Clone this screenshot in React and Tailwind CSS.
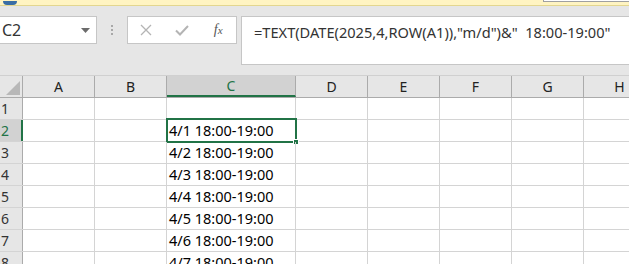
import React from "react";

const cols = [
  { name: "A", w: "w-[72px]" },
  { name: "B", w: "w-[72px]" },
  { name: "C", w: "w-[129px]", sel: true },
  { name: "D", w: "w-[72px]" },
  { name: "E", w: "w-[72px]" },
  { name: "F", w: "w-[72px]" },
  { name: "G", w: "w-[72px]" },
  { name: "H", w: "w-[72px]" },
];

const rows = [1, 2, 3, 4, 5, 6, 7, 8];

const cellText = (r) => (r >= 2 ? `4/${r - 1} 18:00-19:00` : "");

const App = () => {
  return (
    <div className="w-[629px] h-[264px] overflow-hidden bg-white font-['Segoe_UI','Noto_Sans',sans-serif] text-[#222]">
      {/* warning strip */}
      <div className="h-[6px] bg-[#fff4c2] border-b border-[#e3d68f] flex items-end relative">
        <div className="ml-[3px] w-[14px] h-[4px] rounded-b-full bg-[#3a6ea5]" />
        <div className="absolute right-0 top-0 w-[86px] h-[2px] bg-white border-b border-l border-[#a0a0a0]" />
      </div>

      {/* formula bar */}
      <div className="h-[70px] bg-[#e6e6e6] flex items-start pt-[10px] border-b border-[#d0d0d0]">
        <div className="w-[97px] h-[28px] bg-white border border-[#c6c6c6] border-l-0 flex items-center justify-between pl-[2px] pr-[6px]">
          <span className="text-[16px] text-[#333]">C2</span>
          <svg width="9" height="5" viewBox="0 0 9 5">
            <path d="M0 0h9L4.5 5z" fill="#6b6b6b" />
          </svg>
        </div>
        <div className="w-[30px] h-[28px] flex flex-col items-center justify-center gap-[2px]">
          <div className="w-[2px] h-[2px] bg-[#a8a8a8]" />
          <div className="w-[2px] h-[2px] bg-[#a8a8a8]" />
          <div className="w-[2px] h-[2px] bg-[#a8a8a8]" />
        </div>
        <div className="w-[110px] h-[28px] bg-white border border-[#c6c6c6] flex items-center">
          <div className="w-[37px] flex justify-center">
            <svg width="12" height="12" viewBox="0 0 12 12">
              <path d="M1 1l10 10M11 1L1 11" stroke="#b4b4b4" strokeWidth="1.3" />
            </svg>
          </div>
          <div className="w-[36px] flex justify-center">
            <svg width="14" height="11" viewBox="0 0 14 11">
              <path d="M1 5.5l4 4L13 1" stroke="#b4b4b4" strokeWidth="2" fill="none" />
            </svg>
          </div>
          <div className="w-[36px] flex justify-center">
            <span className="font-['Liberation_Serif',serif] italic text-[14px] text-[#555] leading-none">
              f<span className="text-[11px]">x</span>
            </span>
          </div>
        </div>
        <div className="ml-[4px] flex-1 h-[49px] bg-white border border-[#c6c6c6] border-r-0 pl-[12px] pt-[3px]">
          <span className="text-[14.6px] text-[#333]">
            =TEXT(DATE(2025,4,ROW(A1)),"m/d")&amp;"&nbsp; 18:00-19:00"
          </span>
        </div>
      </div>

      {/* column headers */}
      <div className="flex h-[22px] bg-[#e6e6e6] border-b border-[#ababab]">
        <div className="w-[23px] shrink-0 border-r border-[#ababab] flex items-end justify-end p-[2px]">
          <svg width="14" height="14" viewBox="0 0 14 14">
            <path d="M14 0v14H0z" fill="#b8b8b8" />
          </svg>
        </div>
        {cols.map((c) => (
          <div
            key={c.name}
            className={`${c.w} shrink-0 flex items-center justify-center text-[14px] border-r ${
              c.sel
                ? "bg-[#d2d2d2] border-[#ababab] border-b-2 border-b-[#217346] text-[#217346]"
                : "border-[#ababab] text-[#222]"
            }`}
          >
            {c.name}
          </div>
        ))}
      </div>

      {/* grid */}
      {rows.map((r) => (
        <div key={r} className="flex h-[22px] border-b border-[#d4d4d4]">
          <div
            className={`w-[23px] shrink-0 flex items-center pl-[1px] text-[14px] border-r ${
              r === 2
                ? "bg-[#d2d2d2] border-r-2 border-[#217346] text-[#217346]"
                : "bg-[#e6e6e6] border-[#ababab] text-[#333]"
            }`}
          >
            {r}
          </div>
          {cols.map((c) => (
            <div
              key={c.name}
              className={`${c.w} shrink-0 border-r border-[#d4d4d4] relative flex items-center pl-[2px] text-[14.5px] text-black whitespace-nowrap`}
            >
              {c.sel ? cellText(r) : ""}
              {c.sel && r === 2 && (
                <>
                  <div className="absolute left-[-1px] top-[-2px] right-[-2px] bottom-[-2px] border-2 border-[#217346] pointer-events-none" />
                  <div className="absolute right-[-4px] bottom-[-4px] w-[6px] h-[6px] bg-[#217346] border border-white" />
                </>
              )}
            </div>
          ))}
        </div>
      ))}
    </div>
  );
};

export default App;
